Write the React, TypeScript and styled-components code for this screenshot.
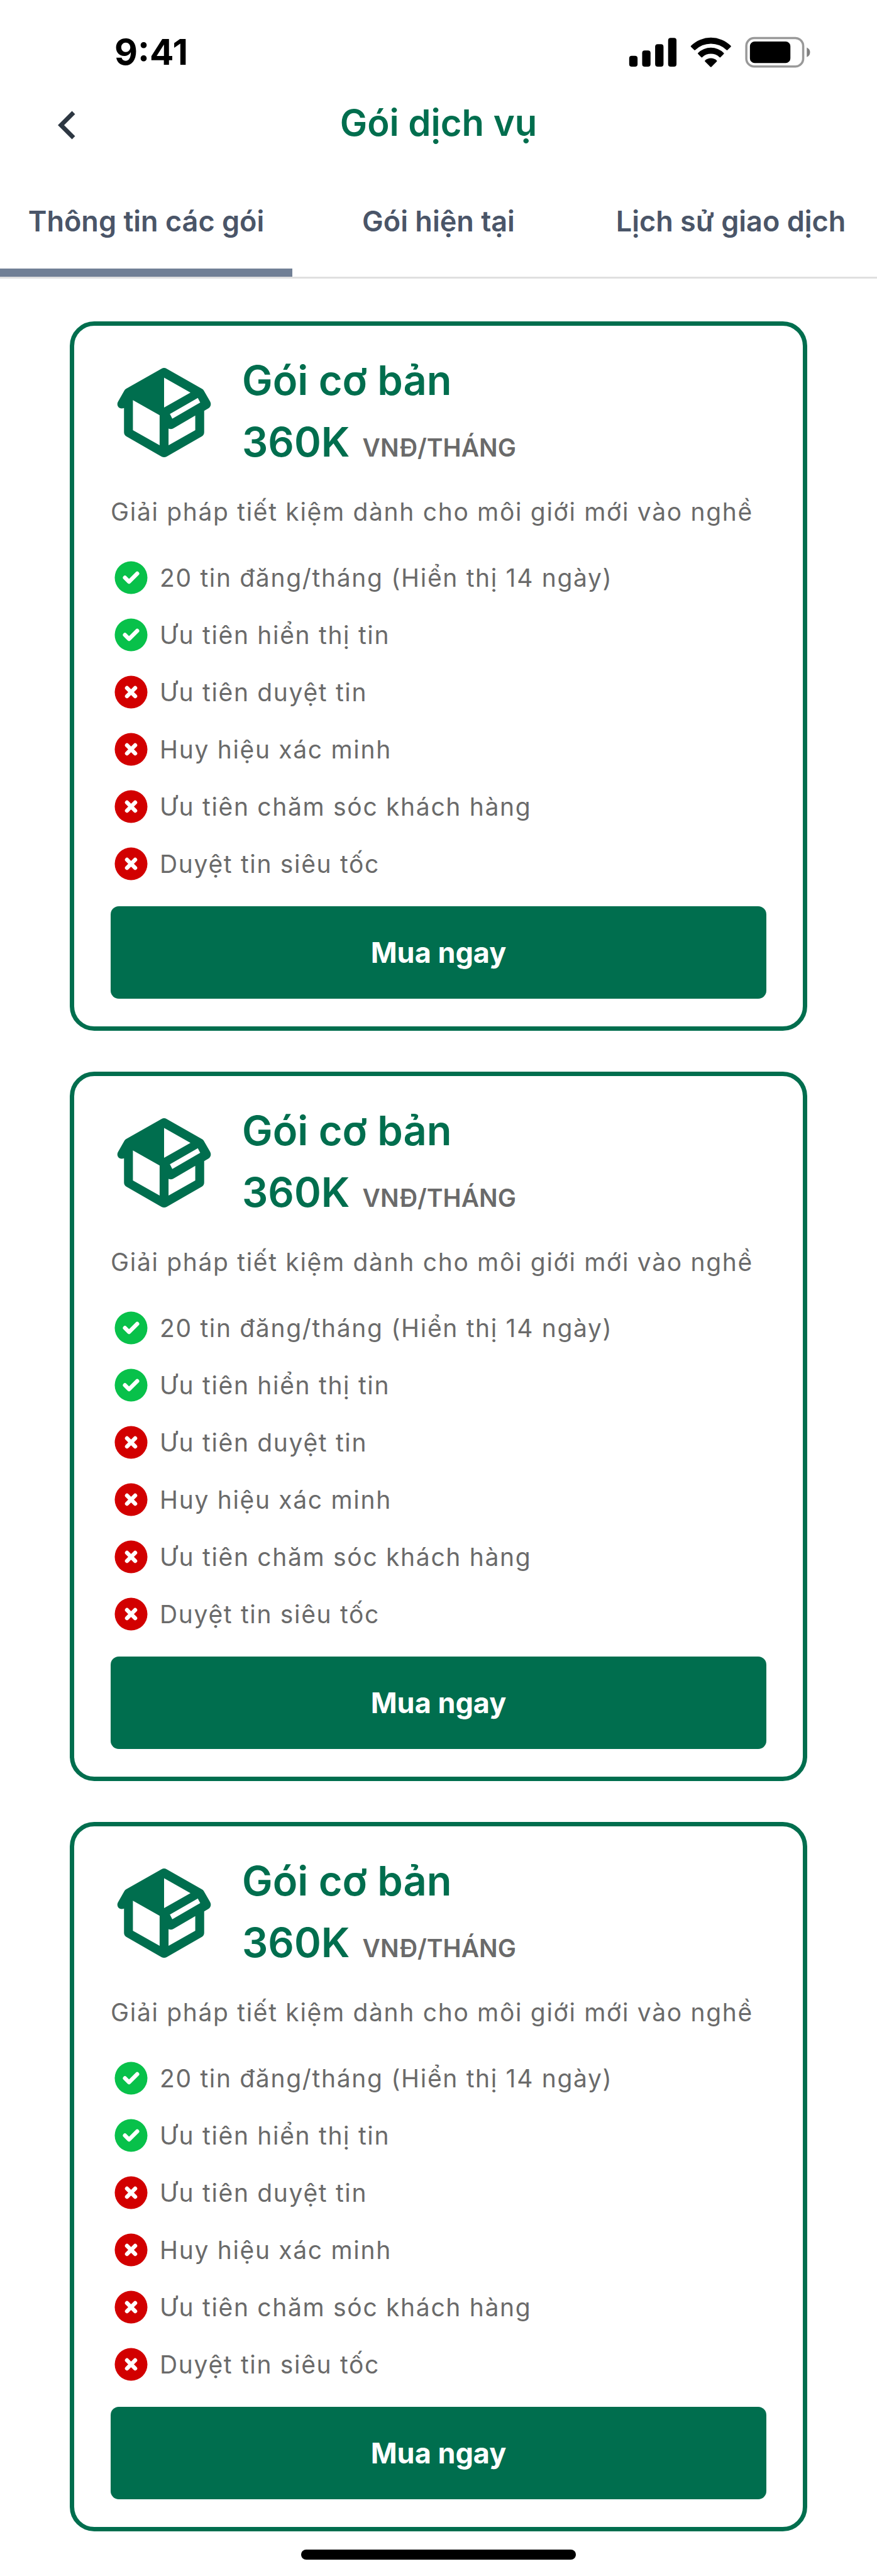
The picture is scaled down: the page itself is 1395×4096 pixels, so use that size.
import React, { useState } from 'react';
import styled, { createGlobalStyle } from 'styled-components';

const GREEN = '#006e4e';
const GREY = '#6a6a6a';

const GlobalStyle = createGlobalStyle`
  * { box-sizing: border-box; }
  body { margin: 0; background: #fff; font-family: Inter, 'Noto Sans', sans-serif; }
  button { font: inherit; border: 0; padding: 0; cursor: pointer; }
  h1, h2, p, ul { margin: 0; padding: 0; }
`;

const Screen = styled.div`
  display: flex;
  flex-direction: column;
`;

const StatusBar = styled.div`
  display: flex;
  align-items: center;
  justify-content: space-between;
  height: 150px;
  padding: 16px 106px 0 182px;
`;

const Clock = styled.time`
  font-size: 57px;
  line-height: 70px;
  font-weight: 700;
  color: #000;
`;

const StatusIcons = styled.div`
  display: flex;
  align-items: center;
  svg { display: block; }
`;

const Header = styled.header`
  display: grid;
  grid-template-columns: 1fr auto 1fr;
  align-items: center;
  height: 90px;
  padding: 0 78px;
`;

const BackButton = styled.button`
  justify-self: start;
  display: flex;
  align-items: flex-end;
  justify-content: center;
  width: 58px;
  height: 58px;
  background: none;
`;

const ScreenTitle = styled.h1`
  font-size: 58px;
  line-height: 70px;
  font-weight: 600;
  color: ${GREEN};
`;

const Tabs = styled.nav`
  display: grid;
  grid-template-columns: repeat(3, 1fr);
  height: 203px;
  border-bottom: 3px solid #e0e0e0;
`;

const Tab = styled.button<{ $active: boolean }>`
  padding-top: 36px;
  background: none;
  border-bottom: 13px solid ${(p) => (p.$active ? '#718096' : 'transparent')};
  font-size: 45px;
  line-height: 56px;
  font-weight: 600;
  color: #4a5568;
  white-space: nowrap;
`;

const PlanList = styled.main`
  display: flex;
  flex-direction: column;
  gap: 65px;
  padding: 68px 111px 29px;
`;

const Card = styled.article`
  display: flex;
  flex-direction: column;
  padding: 38px 58px 44px;
  border: 7px solid ${GREEN};
  border-radius: 39px;
`;

const CardHead = styled.div`
  display: flex;
  align-items: center;
  gap: 39px;
`;

const PlanName = styled.h2`
  font-size: 65px;
  line-height: 98px;
  font-weight: 600;
  color: ${GREEN};
`;

const Price = styled.p`
  display: flex;
  align-items: baseline;
  gap: 20px;
  font-size: 65px;
  line-height: 98px;
  font-weight: 600;
  color: ${GREEN};
`;

const Unit = styled.span`
  font-size: 39px;
  line-height: 48px;
  font-weight: 600;
  color: ${GREY};
`;

const Description = styled.p`
  margin-top: 32px;
  font-size: 39px;
  line-height: 60px;
  letter-spacing: 0.043em;
  color: ${GREY};
`;

const Features = styled.ul`
  display: flex;
  flex-direction: column;
  gap: 26px;
  margin-top: 42px;
  list-style: none;
`;

const Feature = styled.li`
  display: flex;
  align-items: center;
  gap: 13px;
  height: 65px;
  font-size: 39px;
  letter-spacing: 0.043em;
  color: ${GREY};
`;

const BuyButton = styled.button`
  height: 147px;
  margin-top: 35px;
  border-radius: 13px;
  background: ${GREEN};
  color: #fff;
  font-size: 45px;
  line-height: 56px;
  font-weight: 700;
`;

const HomeIndicator = styled.div`
  align-self: center;
  width: 437px;
  height: 16px;
  margin-bottom: 26px;
  border-radius: 8px;
  background: #000;
`;

const StatusGlyphs = () => (
  <svg width="289" height="52" viewBox="0 0 1064 191" aria-hidden="true">
    <g transform="translate(-142 -90)">
      <rect x="145" y="207" width="49" height="63" rx="15" />
      <rect x="221" y="175" width="49" height="95" rx="15" />
      <rect x="297" y="139" width="49" height="131" rx="15" />
      <rect x="373" y="102" width="49" height="168" rx="15" />
      <path d="M507 148a166 166 0 0 1 233 0q3 3 0 6l-19 19q-3 3-6 0a131 131 0 0 0-183 0q-3 3-6 0l-19-19q-3-3 0-6z" />
      <path d="M548 190a108 108 0 0 1 151 0q3 3 0 6l-19 19q-3 3-6 0a72 72 0 0 0-101 0q-3 3-6 0l-19-19q-3-3 0-6z" />
      <path d="M589 234a52 52 0 0 1 69 0q3 3 0 6l-31 31q-3 3-7 0l-31-31q-3-3 0-6z" />
      <rect x="831" y="103" width="333" height="166" rx="46" fill="none" stroke="#999" strokeWidth="13" />
      <rect x="852" y="123" width="237" height="126" rx="28" />
      <path d="M1185 158q19 9 19 28t-19 28z" fill="#808080" />
    </g>
  </svg>
);

const BoxIcon = () => (
  <svg width="170" height="170" viewBox="48 58 624 624" aria-hidden="true">
    <path
      fill={GREEN}
      fillRule="evenodd"
      d="M345 121q15-8 30 0L580 238q8 4 12 11l37 64q11 24-10 40l-25 14V492q0 15-13 24L375 634q-15 8-30 0L139 516q-13-9-13-24V351Q106 359 93 345q-10-12-3-29l38-67q4-7 11-11zM360 174V348L514 261zM178 305V480L334 568V393zM394 386L408 413L571 319L557 292zM386 471V568L542 480V395L415 469q-14 8-29 2z"
    />
  </svg>
);

const FeatureIcon = ({ on }: { on: boolean }) => (
  <svg width="65" height="65" viewBox="0 0 80 80" aria-hidden="true">
    <circle cx="40" cy="40" r="32" fill={on ? '#08c14a' : '#d20000'} />
    <path
      d={on ? 'M28 40l8 8l16-16' : 'M32 32l16 16M48 32l-16 16'}
      fill="none"
      stroke="#fff"
      strokeWidth="8"
      strokeLinecap="round"
      strokeLinejoin="round"
    />
  </svg>
);

const tabs = ['Thông tin các gói', 'Gói hiện tại', 'Lịch sử giao dịch'];

const features = [
  { label: '20 tin đăng/tháng (Hiển thị 14 ngày)', on: true },
  { label: 'Ưu tiên hiển thị tin', on: true },
  { label: 'Ưu tiên duyệt tin', on: false },
  { label: 'Huy hiệu xác minh', on: false },
  { label: 'Ưu tiên chăm sóc khách hàng', on: false },
  { label: 'Duyệt tin siêu tốc', on: false },
];

const plans = [1, 2, 3].map((id) => ({
  id,
  name: 'Gói cơ bản',
  price: '360K',
  unit: 'VNĐ/THÁNG',
  description: 'Giải pháp tiết kiệm dành cho môi giới mới vào nghề',
  features,
}));

export default function App() {
  const [active, setActive] = useState(0);
  return (
    <Screen>
      <GlobalStyle />
      <StatusBar>
        <Clock>9:41</Clock>
        <StatusIcons>
          <StatusGlyphs />
        </StatusIcons>
      </StatusBar>
      <Header>
        <BackButton aria-label="Quay lại">
          <svg width="32" height="50" viewBox="0 0 32 50" fill="none" stroke="#2d3742" strokeWidth="7" aria-hidden="true">
            <path d="M26 5L6 25L26 45" />
          </svg>
        </BackButton>
        <ScreenTitle>Gói dịch vụ</ScreenTitle>
      </Header>
      <Tabs>
        {tabs.map((label, i) => (
          <Tab key={label} $active={i === active} onClick={() => setActive(i)}>
            {label}
          </Tab>
        ))}
      </Tabs>
      <PlanList>
        {plans.map((plan) => (
          <Card key={plan.id}>
            <CardHead>
              <BoxIcon />
              <div>
                <PlanName>{plan.name}</PlanName>
                <Price>
                  {plan.price}
                  <Unit>{plan.unit}</Unit>
                </Price>
              </div>
            </CardHead>
            <Description>{plan.description}</Description>
            <Features>
              {plan.features.map((f) => (
                <Feature key={f.label}>
                  <FeatureIcon on={f.on} />
                  {f.label}
                </Feature>
              ))}
            </Features>
            <BuyButton>Mua ngay</BuyButton>
          </Card>
        ))}
      </PlanList>
      <HomeIndicator />
    </Screen>
  );
}
